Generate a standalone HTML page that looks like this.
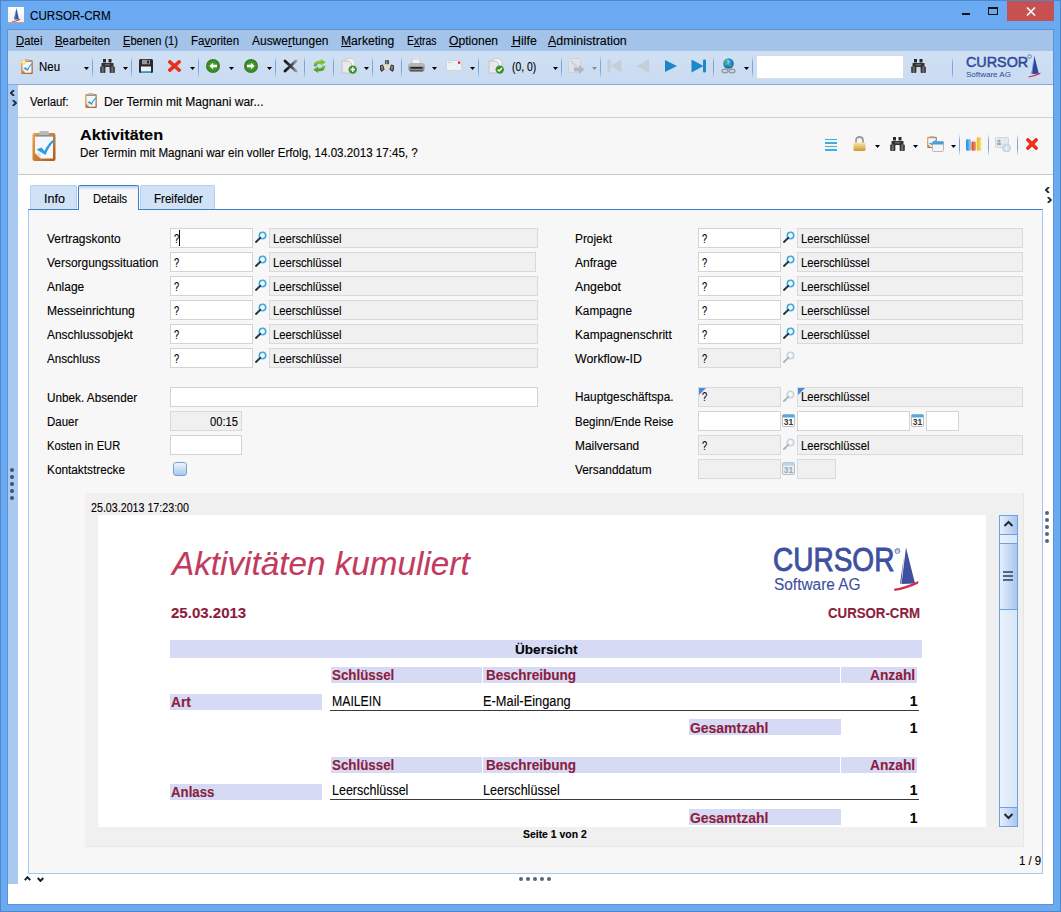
<!DOCTYPE html><html><head><meta charset="utf-8"><style>
html,body{margin:0;padding:0;}
body{width:1061px;height:912px;overflow:hidden;position:relative;background:#6aaaf3;font-family:"Liberation Sans",sans-serif;}
div,svg{position:absolute;box-sizing:border-box;}
.t{white-space:pre;-webkit-text-stroke:0.12px currentColor;}
</style></head><body>
<div style="left:0px;top:0px;width:1061px;height:912px;border:1px solid #4f86c9;"></div>
<div style="left:7px;top:29px;width:1047px;height:876px;border:1px solid #5d93d6;background:#fff;"></div>
<div style="left:8px;top:7px;width:16px;height:16px;background:linear-gradient(#fff,#f4f0ea);border-bottom:1px solid #b8a898;"></div>
<svg style="left:8px;top:7px;" width="16" height="16" viewBox="0 0 16 16"><path d="M8.5 1 L11 12.5 L6.5 12.5 Z" fill="#2d5aa8"/><path d="M8 3 L5.8 12.3 L7.6 12.3 Z" fill="#4b7dcc"/><path d="M4 14.5 Q9 13.5 12.5 11.5 L12 13 Q8 15 4 15.2Z" fill="#d83a5a"/></svg>
<div class="t" style="left:29.50px;top:10px;font-size:12px;line-height:12px;font-weight:normal;font-style:normal;color:#000;transform:scaleX(0.9683);transform-origin:0 0;">CURSOR-CRM</div>
<div style="left:962px;top:13px;width:8px;height:2px;background:#111;"></div>
<div style="left:988px;top:7px;width:10px;height:8px;border:1px solid #1a1410;border-top-width:2px;"></div>
<div style="left:1007px;top:1px;width:47px;height:20px;background:#c75050;"></div>
<svg style="left:1026px;top:7px;" width="10" height="9" viewBox="0 0 10 9"><path d="M1 0.5 L9 8.5 M9 0.5 L1 8.5" stroke="#fff" stroke-width="1.6"/></svg>
<div style="left:8px;top:30px;width:1045px;height:21px;background:#a3c3e9;"></div>
<div class="t" style="left:16.00px;top:35px;font-size:12px;line-height:12px;font-weight:normal;font-style:normal;color:#000;transform:scaleX(0.9422);transform-origin:0 0;">Datei</div>
<div style="left:15.5px;top:46px;width:8.665203426124197px;height:1px;background:#000;"></div>
<div class="t" style="left:55.00px;top:35px;font-size:12px;line-height:12px;font-weight:normal;font-style:normal;color:#000;transform:scaleX(0.9479);transform-origin:0 0;">Bearbeiten</div>
<div style="left:54.5px;top:46px;width:8.087739141675282px;height:1px;background:#000;"></div>
<div class="t" style="left:123.00px;top:35px;font-size:12px;line-height:12px;font-weight:normal;font-style:normal;color:#000;transform:scaleX(0.9259);transform-origin:0 0;">Ebenen (1)</div>
<div style="left:122.5px;top:46px;width:7.911458333333333px;height:1px;background:#000;"></div>
<div class="t" style="left:191.40px;top:35px;font-size:12px;line-height:12px;font-weight:normal;font-style:normal;color:#000;transform:scaleX(0.9612);transform-origin:0 0;">Favoriten</div>
<div style="left:204.36143959832134px;top:46px;width:6.267386091127097px;height:1px;background:#000;"></div>
<div class="t" style="left:252.20px;top:35px;font-size:12px;line-height:12px;font-weight:normal;font-style:normal;color:#000;transform:scaleX(0.9969);transform-origin:0 0;">Auswertungen</div>
<div style="left:287.6061034010946px;top:46px;width:4.484063477326036px;height:1px;background:#000;"></div>
<div class="t" style="left:341.30px;top:35px;font-size:12px;line-height:12px;font-weight:normal;font-style:normal;color:#000;transform:scaleX(1.0118);transform-origin:0 0;">Marketing</div>
<div style="left:340.8px;top:46px;width:10.614213767084284px;height:1px;background:#000;"></div>
<div class="t" style="left:407.40px;top:35px;font-size:12px;line-height:12px;font-weight:normal;font-style:normal;color:#000;transform:scaleX(0.8671);transform-origin:0 0;">Extras</div>
<div style="left:413.84088955026454px;top:46px;width:5.702821869488536px;height:1px;background:#000;"></div>
<div class="t" style="left:449.30px;top:35px;font-size:12px;line-height:12px;font-weight:normal;font-style:normal;color:#000;transform:scaleX(1.0078);transform-origin:0 0;">Optionen</div>
<div style="left:448.8px;top:46px;width:9.906550184729058px;height:1px;background:#000;"></div>
<div class="t" style="left:511.50px;top:35px;font-size:12px;line-height:12px;font-weight:normal;font-style:normal;color:#000;transform:scaleX(1.0375);transform-origin:0 0;">Hilfe</div>
<div style="left:511.0px;top:46px;width:9.49123437499999px;height:1px;background:#000;"></div>
<div class="t" style="left:548.20px;top:35px;font-size:12px;line-height:12px;font-weight:normal;font-style:normal;color:#000;transform:scaleX(1.0353);transform-origin:0 0;">Administration</div>
<div style="left:547.7px;top:46px;width:8.786560280189416px;height:1px;background:#000;"></div>
<div style="left:8px;top:51px;width:1045px;height:33px;background:linear-gradient(#d0e0f4,#c9dbf2);"></div>
<div style="left:8px;top:84px;width:1045px;height:1px;background:#7eaee3;"></div>
<div style="left:8px;top:85px;width:10px;height:799px;background:#a9c9f0;"></div>
<div style="left:18px;top:85px;width:1035px;height:819px;background:#fff;"></div>
<div style="left:18px;top:85px;width:1035px;height:32px;background:#f7f7f7;"></div>
<div style="left:18px;top:117px;width:1035px;height:1px;background:#cfcfcf;"></div>
<div class="t" style="left:30.30px;top:96px;font-size:12px;line-height:12px;font-weight:normal;font-style:normal;color:#000;transform:scaleX(0.9513);transform-origin:0 0;">Verlauf:</div>
<div class="t" style="left:103.50px;top:96px;font-size:12px;line-height:12px;font-weight:normal;font-style:normal;color:#000;transform:scaleX(1.0020);transform-origin:0 0;">Der Termin mit Magnani war...</div>
<div style="left:18px;top:118px;width:1035px;height:56px;background:#f7f7f7;"></div>
<div style="left:18px;top:174px;width:1035px;height:1px;background:#c8c8c8;"></div>
<div class="t" style="left:80.20px;top:128px;font-size:14px;line-height:14px;font-weight:bold;font-style:normal;color:#000;transform:scaleX(1.1605);transform-origin:0 0;">Aktivitäten</div>
<div class="t" style="left:80.00px;top:147px;font-size:12px;line-height:12px;font-weight:normal;font-style:normal;color:#000;transform:scaleX(0.9670);transform-origin:0 0;">Der Termin mit Magnani war ein voller Erfolg, 14.03.2013 17:45, ?</div>
<div style="left:28px;top:209px;width:1015px;height:665px;background:#f7f7f7;border:1px solid #a7c7ee;border-top:1px solid #3f7fd0;"></div>
<div style="left:30px;top:185px;width:47px;height:24px;background:#cfe2f6;border:1px solid #b3cfef;border-bottom:none;border-radius:2px 2px 0 0;"></div>
<div style="left:140px;top:185px;width:75px;height:24px;background:#cfe2f6;border:1px solid #b3cfef;border-bottom:none;border-radius:2px 2px 0 0;"></div>
<div style="left:78px;top:185px;width:61px;height:25px;background:linear-gradient(#b9d3f2,#f7f7f7 4px,#f7f7f7);border:1px solid #3f7fd0;border-bottom:none;border-radius:2px 2px 0 0;"></div>
<div class="t" style="left:43.80px;top:193px;font-size:12px;line-height:12px;font-weight:normal;font-style:normal;color:#000;transform:scaleX(1.0429);transform-origin:0 0;">Info</div>
<div class="t" style="left:92.80px;top:193px;font-size:12px;line-height:12px;font-weight:normal;font-style:normal;color:#000;transform:scaleX(0.9329);transform-origin:0 0;">Details</div>
<div class="t" style="left:154.00px;top:193px;font-size:12px;line-height:12px;font-weight:normal;font-style:normal;color:#000;transform:scaleX(0.9645);transform-origin:0 0;">Freifelder</div>
<div class="t" style="left:47.00px;top:233px;font-size:12px;line-height:12px;font-weight:normal;font-style:normal;color:#000;transform:scaleX(0.9941);transform-origin:0 0;">Vertragskonto</div>
<div style="left:170px;top:228px;width:83px;height:20px;background:#fff;border:1px solid #d4d4d4;"></div>
<div class="t" style="left:174.00px;top:233px;font-size:12px;line-height:12px;font-weight:normal;font-style:normal;color:#000;transform:scaleX(0.7800);transform-origin:0 0;">?</div>
<div style="left:269px;top:228px;width:269px;height:20px;background:#f0f0f0;border:1px solid #d9d9d9;"></div>
<svg style="left:255px;top:231px;" width="12" height="12" viewBox="0 0 12 12"><circle cx="7.5" cy="4.5" r="3.2" fill="none" stroke="#3fa9db" stroke-width="1.6"/><path d="M5.2 6.8 L1 11" stroke="#1d2f3c" stroke-width="1.8" stroke-linecap="round"/></svg>
<div class="t" style="left:273.00px;top:233px;font-size:12px;line-height:12px;font-weight:normal;font-style:normal;color:#000;transform:scaleX(0.9321);transform-origin:0 0;">Leerschlüssel</div>
<div class="t" style="left:47.00px;top:257px;font-size:12px;line-height:12px;font-weight:normal;font-style:normal;color:#000;transform:scaleX(0.9948);transform-origin:0 0;">Versorgungssituation</div>
<div style="left:170px;top:252px;width:83px;height:20px;background:#fff;border:1px solid #d4d4d4;"></div>
<div class="t" style="left:174.00px;top:257px;font-size:12px;line-height:12px;font-weight:normal;font-style:normal;color:#000;transform:scaleX(0.7800);transform-origin:0 0;">?</div>
<div style="left:269px;top:252px;width:267px;height:20px;background:#f0f0f0;border:1px solid #d9d9d9;"></div>
<svg style="left:255px;top:255px;" width="12" height="12" viewBox="0 0 12 12"><circle cx="7.5" cy="4.5" r="3.2" fill="none" stroke="#3fa9db" stroke-width="1.6"/><path d="M5.2 6.8 L1 11" stroke="#1d2f3c" stroke-width="1.8" stroke-linecap="round"/></svg>
<div class="t" style="left:273.00px;top:257px;font-size:12px;line-height:12px;font-weight:normal;font-style:normal;color:#000;transform:scaleX(0.9321);transform-origin:0 0;">Leerschlüssel</div>
<div class="t" style="left:47.00px;top:281px;font-size:12px;line-height:12px;font-weight:normal;font-style:normal;color:#000;transform:scaleX(0.9952);transform-origin:0 0;">Anlage</div>
<div style="left:170px;top:276px;width:83px;height:20px;background:#fff;border:1px solid #d4d4d4;"></div>
<div class="t" style="left:174.00px;top:281px;font-size:12px;line-height:12px;font-weight:normal;font-style:normal;color:#000;transform:scaleX(0.7800);transform-origin:0 0;">?</div>
<div style="left:269px;top:276px;width:269px;height:20px;background:#f0f0f0;border:1px solid #d9d9d9;"></div>
<svg style="left:255px;top:279px;" width="12" height="12" viewBox="0 0 12 12"><circle cx="7.5" cy="4.5" r="3.2" fill="none" stroke="#3fa9db" stroke-width="1.6"/><path d="M5.2 6.8 L1 11" stroke="#1d2f3c" stroke-width="1.8" stroke-linecap="round"/></svg>
<div class="t" style="left:273.00px;top:281px;font-size:12px;line-height:12px;font-weight:normal;font-style:normal;color:#000;transform:scaleX(0.9321);transform-origin:0 0;">Leerschlüssel</div>
<div class="t" style="left:47.00px;top:305px;font-size:12px;line-height:12px;font-weight:normal;font-style:normal;color:#000;transform:scaleX(1.0050);transform-origin:0 0;">Messeinrichtung</div>
<div style="left:170px;top:300px;width:83px;height:20px;background:#fff;border:1px solid #d4d4d4;"></div>
<div class="t" style="left:174.00px;top:305px;font-size:12px;line-height:12px;font-weight:normal;font-style:normal;color:#000;transform:scaleX(0.7800);transform-origin:0 0;">?</div>
<div style="left:269px;top:300px;width:269px;height:20px;background:#f0f0f0;border:1px solid #d9d9d9;"></div>
<svg style="left:255px;top:303px;" width="12" height="12" viewBox="0 0 12 12"><circle cx="7.5" cy="4.5" r="3.2" fill="none" stroke="#3fa9db" stroke-width="1.6"/><path d="M5.2 6.8 L1 11" stroke="#1d2f3c" stroke-width="1.8" stroke-linecap="round"/></svg>
<div class="t" style="left:273.00px;top:305px;font-size:12px;line-height:12px;font-weight:normal;font-style:normal;color:#000;transform:scaleX(0.9321);transform-origin:0 0;">Leerschlüssel</div>
<div class="t" style="left:47.00px;top:329px;font-size:12px;line-height:12px;font-weight:normal;font-style:normal;color:#000;transform:scaleX(0.9908);transform-origin:0 0;">Anschlussobjekt</div>
<div style="left:170px;top:324px;width:83px;height:20px;background:#fff;border:1px solid #d4d4d4;"></div>
<div class="t" style="left:174.00px;top:329px;font-size:12px;line-height:12px;font-weight:normal;font-style:normal;color:#000;transform:scaleX(0.7800);transform-origin:0 0;">?</div>
<div style="left:269px;top:324px;width:269px;height:20px;background:#f0f0f0;border:1px solid #d9d9d9;"></div>
<svg style="left:255px;top:327px;" width="12" height="12" viewBox="0 0 12 12"><circle cx="7.5" cy="4.5" r="3.2" fill="none" stroke="#3fa9db" stroke-width="1.6"/><path d="M5.2 6.8 L1 11" stroke="#1d2f3c" stroke-width="1.8" stroke-linecap="round"/></svg>
<div class="t" style="left:273.00px;top:329px;font-size:12px;line-height:12px;font-weight:normal;font-style:normal;color:#000;transform:scaleX(0.9321);transform-origin:0 0;">Leerschlüssel</div>
<div class="t" style="left:47.00px;top:353px;font-size:12px;line-height:12px;font-weight:normal;font-style:normal;color:#000;transform:scaleX(0.9686);transform-origin:0 0;">Anschluss</div>
<div style="left:170px;top:348px;width:83px;height:20px;background:#fff;border:1px solid #d4d4d4;"></div>
<div class="t" style="left:174.00px;top:353px;font-size:12px;line-height:12px;font-weight:normal;font-style:normal;color:#000;transform:scaleX(0.7800);transform-origin:0 0;">?</div>
<div style="left:269px;top:348px;width:269px;height:20px;background:#f0f0f0;border:1px solid #d9d9d9;"></div>
<svg style="left:255px;top:351px;" width="12" height="12" viewBox="0 0 12 12"><circle cx="7.5" cy="4.5" r="3.2" fill="none" stroke="#3fa9db" stroke-width="1.6"/><path d="M5.2 6.8 L1 11" stroke="#1d2f3c" stroke-width="1.8" stroke-linecap="round"/></svg>
<div class="t" style="left:273.00px;top:353px;font-size:12px;line-height:12px;font-weight:normal;font-style:normal;color:#000;transform:scaleX(0.9321);transform-origin:0 0;">Leerschlüssel</div>
<div style="left:179px;top:230px;width:1px;height:16px;background:#000;"></div>
<div class="t" style="left:47.00px;top:392px;font-size:12px;line-height:12px;font-weight:normal;font-style:normal;color:#000;transform:scaleX(0.9789);transform-origin:0 0;">Unbek. Absender</div>
<div class="t" style="left:47.00px;top:416px;font-size:12px;line-height:12px;font-weight:normal;font-style:normal;color:#000;transform:scaleX(0.9572);transform-origin:0 0;">Dauer</div>
<div class="t" style="left:47.00px;top:440px;font-size:12px;line-height:12px;font-weight:normal;font-style:normal;color:#000;transform:scaleX(0.9299);transform-origin:0 0;">Kosten in EUR</div>
<div class="t" style="left:47.00px;top:464px;font-size:12px;line-height:12px;font-weight:normal;font-style:normal;color:#000;transform:scaleX(0.9839);transform-origin:0 0;">Kontaktstrecke</div>
<div style="left:170px;top:387px;width:368px;height:20px;background:#fff;border:1px solid #d4d4d4;"></div>
<div style="left:170px;top:411px;width:72px;height:20px;background:#f0f0f0;border:1px solid #d9d9d9;"></div>
<div class="t" style="left:210.34px;top:416px;font-size:12px;line-height:12px;font-weight:normal;font-style:normal;color:#000;transform:scaleX(0.9300);transform-origin:0 0;">00:15</div>
<div style="left:170px;top:435px;width:72px;height:20px;background:#fff;border:1px solid #d4d4d4;"></div>
<div style="left:173px;top:462px;width:14px;height:14px;border:1px solid #76a3e0;border-radius:3px;background:linear-gradient(#f0f5fc,#a9c6ee);"></div>
<div class="t" style="left:575.00px;top:233px;font-size:12px;line-height:12px;font-weight:normal;font-style:normal;color:#000;transform:scaleX(0.9887);transform-origin:0 0;">Projekt</div>
<div style="left:698px;top:228px;width:83px;height:20px;background:#fff;border:1px solid #d4d4d4;"></div>
<div class="t" style="left:702.00px;top:233px;font-size:12px;line-height:12px;font-weight:normal;font-style:normal;color:#000;transform:scaleX(0.7800);transform-origin:0 0;">?</div>
<div style="left:797px;top:228px;width:226px;height:20px;background:#f0f0f0;border:1px solid #d9d9d9;"></div>
<svg style="left:783px;top:231px;" width="12" height="12" viewBox="0 0 12 12"><circle cx="7.5" cy="4.5" r="3.2" fill="none" stroke="#3fa9db" stroke-width="1.6"/><path d="M5.2 6.8 L1 11" stroke="#1d2f3c" stroke-width="1.8" stroke-linecap="round"/></svg>
<div class="t" style="left:801.00px;top:233px;font-size:12px;line-height:12px;font-weight:normal;font-style:normal;color:#000;transform:scaleX(0.9321);transform-origin:0 0;">Leerschlüssel</div>
<div class="t" style="left:575.00px;top:257px;font-size:12px;line-height:12px;font-weight:normal;font-style:normal;color:#000;">Anfrage</div>
<div style="left:698px;top:252px;width:83px;height:20px;background:#fff;border:1px solid #d4d4d4;"></div>
<div class="t" style="left:702.00px;top:257px;font-size:12px;line-height:12px;font-weight:normal;font-style:normal;color:#000;transform:scaleX(0.7800);transform-origin:0 0;">?</div>
<div style="left:797px;top:252px;width:226px;height:20px;background:#f0f0f0;border:1px solid #d9d9d9;"></div>
<svg style="left:783px;top:255px;" width="12" height="12" viewBox="0 0 12 12"><circle cx="7.5" cy="4.5" r="3.2" fill="none" stroke="#3fa9db" stroke-width="1.6"/><path d="M5.2 6.8 L1 11" stroke="#1d2f3c" stroke-width="1.8" stroke-linecap="round"/></svg>
<div class="t" style="left:801.00px;top:257px;font-size:12px;line-height:12px;font-weight:normal;font-style:normal;color:#000;transform:scaleX(0.9321);transform-origin:0 0;">Leerschlüssel</div>
<div class="t" style="left:575.00px;top:281px;font-size:12px;line-height:12px;font-weight:normal;font-style:normal;color:#000;transform:scaleX(1.0268);transform-origin:0 0;">Angebot</div>
<div style="left:698px;top:276px;width:83px;height:20px;background:#fff;border:1px solid #d4d4d4;"></div>
<div class="t" style="left:702.00px;top:281px;font-size:12px;line-height:12px;font-weight:normal;font-style:normal;color:#000;transform:scaleX(0.7800);transform-origin:0 0;">?</div>
<div style="left:797px;top:276px;width:226px;height:20px;background:#f0f0f0;border:1px solid #d9d9d9;"></div>
<svg style="left:783px;top:279px;" width="12" height="12" viewBox="0 0 12 12"><circle cx="7.5" cy="4.5" r="3.2" fill="none" stroke="#3fa9db" stroke-width="1.6"/><path d="M5.2 6.8 L1 11" stroke="#1d2f3c" stroke-width="1.8" stroke-linecap="round"/></svg>
<div class="t" style="left:801.00px;top:281px;font-size:12px;line-height:12px;font-weight:normal;font-style:normal;color:#000;transform:scaleX(0.9321);transform-origin:0 0;">Leerschlüssel</div>
<div class="t" style="left:575.00px;top:305px;font-size:12px;line-height:12px;font-weight:normal;font-style:normal;color:#000;transform:scaleX(0.9807);transform-origin:0 0;">Kampagne</div>
<div style="left:698px;top:300px;width:83px;height:20px;background:#fff;border:1px solid #d4d4d4;"></div>
<div class="t" style="left:702.00px;top:305px;font-size:12px;line-height:12px;font-weight:normal;font-style:normal;color:#000;transform:scaleX(0.7800);transform-origin:0 0;">?</div>
<div style="left:797px;top:300px;width:226px;height:20px;background:#f0f0f0;border:1px solid #d9d9d9;"></div>
<svg style="left:783px;top:303px;" width="12" height="12" viewBox="0 0 12 12"><circle cx="7.5" cy="4.5" r="3.2" fill="none" stroke="#3fa9db" stroke-width="1.6"/><path d="M5.2 6.8 L1 11" stroke="#1d2f3c" stroke-width="1.8" stroke-linecap="round"/></svg>
<div class="t" style="left:801.00px;top:305px;font-size:12px;line-height:12px;font-weight:normal;font-style:normal;color:#000;transform:scaleX(0.9321);transform-origin:0 0;">Leerschlüssel</div>
<div class="t" style="left:575.00px;top:329px;font-size:12px;line-height:12px;font-weight:normal;font-style:normal;color:#000;">Kampagnenschritt</div>
<div style="left:698px;top:324px;width:83px;height:20px;background:#fff;border:1px solid #d4d4d4;"></div>
<div class="t" style="left:702.00px;top:329px;font-size:12px;line-height:12px;font-weight:normal;font-style:normal;color:#000;transform:scaleX(0.7800);transform-origin:0 0;">?</div>
<div style="left:797px;top:324px;width:226px;height:20px;background:#f0f0f0;border:1px solid #d9d9d9;"></div>
<svg style="left:783px;top:327px;" width="12" height="12" viewBox="0 0 12 12"><circle cx="7.5" cy="4.5" r="3.2" fill="none" stroke="#3fa9db" stroke-width="1.6"/><path d="M5.2 6.8 L1 11" stroke="#1d2f3c" stroke-width="1.8" stroke-linecap="round"/></svg>
<div class="t" style="left:801.00px;top:329px;font-size:12px;line-height:12px;font-weight:normal;font-style:normal;color:#000;transform:scaleX(0.9321);transform-origin:0 0;">Leerschlüssel</div>
<div class="t" style="left:575.00px;top:353px;font-size:12px;line-height:12px;font-weight:normal;font-style:normal;color:#000;transform:scaleX(1.0276);transform-origin:0 0;">Workflow-ID</div>
<div style="left:698px;top:348px;width:83px;height:20px;background:#f0f0f0;border:1px solid #d9d9d9;"></div>
<div class="t" style="left:702.00px;top:353px;font-size:12px;line-height:12px;font-weight:normal;font-style:normal;color:#000;transform:scaleX(0.7800);transform-origin:0 0;">?</div>
<svg style="left:783px;top:351px;" width="12" height="12" viewBox="0 0 12 12"><circle cx="7.5" cy="4.5" r="3.2" fill="none" stroke="#c6d3dc" stroke-width="1.6"/><path d="M5.2 6.8 L1 11" stroke="#aab4bc" stroke-width="1.8" stroke-linecap="round"/></svg>
<div class="t" style="left:575.00px;top:391px;font-size:12px;line-height:12px;font-weight:normal;font-style:normal;color:#000;transform:scaleX(0.9842);transform-origin:0 0;">Hauptgeschäftspa.</div>
<div class="t" style="left:575.00px;top:416px;font-size:12px;line-height:12px;font-weight:normal;font-style:normal;color:#000;transform:scaleX(0.9570);transform-origin:0 0;">Beginn/Ende Reise</div>
<div class="t" style="left:575.00px;top:440px;font-size:12px;line-height:12px;font-weight:normal;font-style:normal;color:#000;transform:scaleX(0.9910);transform-origin:0 0;">Mailversand</div>
<div class="t" style="left:575.00px;top:464px;font-size:12px;line-height:12px;font-weight:normal;font-style:normal;color:#000;transform:scaleX(0.9897);transform-origin:0 0;">Versanddatum</div>
<div style="left:698px;top:387px;width:83px;height:20px;background:#f0f0f0;border:1px solid #d9d9d9;"></div>
<div class="t" style="left:702.00px;top:391px;font-size:12px;line-height:12px;font-weight:normal;font-style:normal;color:#000;transform:scaleX(0.7800);transform-origin:0 0;">?</div>
<svg style="left:783px;top:390px;" width="12" height="12" viewBox="0 0 12 12"><circle cx="7.5" cy="4.5" r="3.2" fill="none" stroke="#c6d3dc" stroke-width="1.6"/><path d="M5.2 6.8 L1 11" stroke="#aab4bc" stroke-width="1.8" stroke-linecap="round"/></svg>
<div style="left:797px;top:387px;width:226px;height:20px;background:#f0f0f0;border:1px solid #d9d9d9;"></div>
<div class="t" style="left:801.00px;top:391px;font-size:12px;line-height:12px;font-weight:normal;font-style:normal;color:#000;transform:scaleX(0.9321);transform-origin:0 0;">Leerschlüssel</div>
<svg style="left:699px;top:388px;" width="8" height="8" viewBox="0 0 8 8"><path d="M0 0 H7 L0 7 Z" fill="#4a8ad8"/></svg>
<svg style="left:798px;top:388px;" width="8" height="8" viewBox="0 0 8 8"><path d="M0 0 H7 L0 7 Z" fill="#4a8ad8"/></svg>
<div style="left:698px;top:411px;width:83px;height:20px;background:#fff;border:1px solid #d4d4d4;"></div>
<div style="left:797px;top:411px;width:113px;height:20px;background:#fff;border:1px solid #d4d4d4;"></div>
<div style="left:926px;top:411px;width:33px;height:20px;background:#fff;border:1px solid #d4d4d4;"></div>
<svg style="left:782px;top:414px;" width="13" height="13" viewBox="0 0 13 13"><rect x="0.5" y="0.5" width="12" height="12" rx="1.5" fill="#fff" stroke="#b0b0b0" stroke-width="0.8"/><rect x="0.5" y="0.5" width="12" height="3" rx="1" fill="#52a8e0"/><text x="6.5" y="11.3" font-family="Liberation Sans" font-weight="bold" font-size="8.5" text-anchor="middle" fill="#333">31</text></svg>
<svg style="left:911px;top:414px;" width="13" height="13" viewBox="0 0 13 13"><rect x="0.5" y="0.5" width="12" height="12" rx="1.5" fill="#fff" stroke="#b0b0b0" stroke-width="0.8"/><rect x="0.5" y="0.5" width="12" height="3" rx="1" fill="#52a8e0"/><text x="6.5" y="11.3" font-family="Liberation Sans" font-weight="bold" font-size="8.5" text-anchor="middle" fill="#333">31</text></svg>
<div style="left:698px;top:435px;width:83px;height:20px;background:#f0f0f0;border:1px solid #d9d9d9;"></div>
<div class="t" style="left:702.00px;top:440px;font-size:12px;line-height:12px;font-weight:normal;font-style:normal;color:#000;transform:scaleX(0.7800);transform-origin:0 0;">?</div>
<svg style="left:783px;top:438px;" width="12" height="12" viewBox="0 0 12 12"><circle cx="7.5" cy="4.5" r="3.2" fill="none" stroke="#c6d3dc" stroke-width="1.6"/><path d="M5.2 6.8 L1 11" stroke="#aab4bc" stroke-width="1.8" stroke-linecap="round"/></svg>
<div style="left:797px;top:435px;width:226px;height:20px;background:#f0f0f0;border:1px solid #d9d9d9;"></div>
<div class="t" style="left:801.00px;top:440px;font-size:12px;line-height:12px;font-weight:normal;font-style:normal;color:#000;transform:scaleX(0.9321);transform-origin:0 0;">Leerschlüssel</div>
<div style="left:698px;top:459px;width:83px;height:20px;background:#f0f0f0;border:1px solid #d9d9d9;"></div>
<div style="left:797px;top:459px;width:39px;height:20px;background:#f0f0f0;border:1px solid #d9d9d9;"></div>
<svg style="left:782px;top:462px;" width="13" height="13" viewBox="0 0 13 13"><rect x="0.5" y="0.5" width="12" height="12" rx="1.5" fill="#e6edf3" stroke="#b0b0b0" stroke-width="0.8"/><rect x="0.5" y="0.5" width="12" height="3" rx="1" fill="#b8d4ea"/><text x="6.5" y="11.3" font-family="Liberation Sans" font-weight="bold" font-size="8.5" text-anchor="middle" fill="#9aa">31</text></svg>
<div style="left:85px;top:493px;width:939px;height:354px;background:#f0f0f0;border-right:1px solid #e6e6e6;border-bottom:1px solid #e6e6e6;"></div>
<div class="t" style="left:91.00px;top:502px;font-size:12px;line-height:12px;font-weight:normal;font-style:normal;color:#000;transform:scaleX(0.8901);transform-origin:0 0;">25.03.2013 17:23:00</div>
<div style="left:98px;top:515px;width:888px;height:312px;background:#fff;"></div>
<div class="t" style="left:523.10px;top:830px;font-size:10px;line-height:10px;font-weight:bold;font-style:normal;color:#000;transform:scaleX(1.0417);transform-origin:0 0;">Seite 1 von 2</div>
<div class="t" style="left:171.66px;top:547px;font-size:33px;line-height:33px;font-weight:normal;font-style:italic;color:#c23b5e;transform:scaleX(1.0082);transform-origin:0 0;">Aktivitäten kumuliert</div>
<div class="t" style="left:170.80px;top:606px;font-size:14px;line-height:14px;font-weight:bold;font-style:normal;color:#8c1d3c;transform:scaleX(1.0732);transform-origin:0 0;">25.03.2013</div>
<div class="t" style="left:828.30px;top:606px;font-size:14px;line-height:14px;font-weight:bold;font-style:normal;color:#8c1d3c;transform:scaleX(0.9462);transform-origin:0 0;">CURSOR-CRM</div>
<div style="left:170px;top:640px;width:752px;height:18px;background:#d6daf4;"></div>
<div class="t" style="left:514.70px;top:643px;font-size:13px;line-height:13px;font-weight:bold;font-style:normal;color:#000;transform:scaleX(1.0446);transform-origin:0 0;">Übersicht</div>
<div style="left:331px;top:667px;width:151px;height:16px;background:#d6daf4;"></div>
<div style="left:483px;top:667px;width:357px;height:16px;background:#d6daf4;"></div>
<div style="left:841px;top:667px;width:76px;height:16px;background:#d6daf4;"></div>
<div class="t" style="left:332.20px;top:668px;font-size:14px;line-height:14px;font-weight:bold;font-style:normal;color:#8c1d3c;transform:scaleX(0.9529);transform-origin:0 0;">Schlüssel</div>
<div class="t" style="left:485.70px;top:668px;font-size:14px;line-height:14px;font-weight:bold;font-style:normal;color:#8c1d3c;transform:scaleX(0.9649);transform-origin:0 0;">Beschreibung</div>
<div class="t" style="left:870.40px;top:668px;font-size:14px;line-height:14px;font-weight:bold;font-style:normal;color:#8c1d3c;transform:scaleX(0.9843);transform-origin:0 0;">Anzahl</div>
<div style="left:170px;top:694px;width:152px;height:16px;background:#d6daf4;"></div>
<div class="t" style="left:171.10px;top:695px;font-size:14px;line-height:14px;font-weight:bold;font-style:normal;color:#8c1d3c;transform:scaleX(0.9837);transform-origin:0 0;">Art</div>
<div class="t" style="left:332.00px;top:694px;font-size:14px;line-height:14px;font-weight:normal;font-style:normal;color:#000;transform:scaleX(0.8750);transform-origin:0 0;">MAILEIN</div>
<div class="t" style="left:483.30px;top:694px;font-size:14px;line-height:14px;font-weight:normal;font-style:normal;color:#000;transform:scaleX(0.9165);transform-origin:0 0;">E-Mail-Eingang</div>
<div class="t" style="left:909.63px;top:694px;font-size:14px;line-height:14px;font-weight:bold;font-style:normal;color:#000;">1</div>
<div style="left:330px;top:710px;width:589px;height:1px;background:#3a3a3a;"></div>
<div style="left:689px;top:719px;width:152px;height:16px;background:#d6daf4;"></div>
<div class="t" style="left:690.30px;top:721px;font-size:14px;line-height:14px;font-weight:bold;font-style:normal;color:#8c1d3c;transform:scaleX(0.9961);transform-origin:0 0;">Gesamtzahl</div>
<div class="t" style="left:909.63px;top:721px;font-size:14px;line-height:14px;font-weight:bold;font-style:normal;color:#000;">1</div>
<div style="left:331px;top:757px;width:151px;height:16px;background:#d6daf4;"></div>
<div style="left:483px;top:757px;width:357px;height:16px;background:#d6daf4;"></div>
<div style="left:841px;top:757px;width:76px;height:16px;background:#d6daf4;"></div>
<div class="t" style="left:332.20px;top:758px;font-size:14px;line-height:14px;font-weight:bold;font-style:normal;color:#8c1d3c;transform:scaleX(0.9529);transform-origin:0 0;">Schlüssel</div>
<div class="t" style="left:485.70px;top:758px;font-size:14px;line-height:14px;font-weight:bold;font-style:normal;color:#8c1d3c;transform:scaleX(0.9649);transform-origin:0 0;">Beschreibung</div>
<div class="t" style="left:870.40px;top:758px;font-size:14px;line-height:14px;font-weight:bold;font-style:normal;color:#8c1d3c;transform:scaleX(0.9843);transform-origin:0 0;">Anzahl</div>
<div style="left:170px;top:784px;width:152px;height:16px;background:#d6daf4;"></div>
<div class="t" style="left:171.10px;top:785px;font-size:14px;line-height:14px;font-weight:bold;font-style:normal;color:#8c1d3c;transform:scaleX(0.9451);transform-origin:0 0;">Anlass</div>
<div class="t" style="left:332.00px;top:783px;font-size:14px;line-height:14px;font-weight:normal;font-style:normal;color:#000;transform:scaleX(0.8924);transform-origin:0 0;">Leerschlüssel</div>
<div class="t" style="left:483.30px;top:783px;font-size:14px;line-height:14px;font-weight:normal;font-style:normal;color:#000;transform:scaleX(0.8959);transform-origin:0 0;">Leerschlüssel</div>
<div class="t" style="left:909.63px;top:783px;font-size:14px;line-height:14px;font-weight:bold;font-style:normal;color:#000;">1</div>
<div style="left:330px;top:799px;width:589px;height:1px;background:#3a3a3a;"></div>
<div style="left:689px;top:809px;width:152px;height:16px;background:#d6daf4;"></div>
<div class="t" style="left:690.30px;top:811px;font-size:14px;line-height:14px;font-weight:bold;font-style:normal;color:#8c1d3c;transform:scaleX(0.9961);transform-origin:0 0;">Gesamtzahl</div>
<div class="t" style="left:909.63px;top:811px;font-size:14px;line-height:14px;font-weight:bold;font-style:normal;color:#000;">1</div>
<div style="left:999px;top:515px;width:19px;height:312px;background:linear-gradient(90deg,#eaf2fc,#d8e6f8);border:1px solid #6fa0e0;"></div>
<div style="left:999px;top:515px;width:19px;height:20px;background:linear-gradient(90deg,#e6effb,#a9c6ee);border:1px solid #6fa0e0;"></div>
<div style="left:999px;top:543px;width:19px;height:67px;background:linear-gradient(90deg,#e6effb,#a9c6ee);border:1px solid #6fa0e0;"></div>
<div style="left:999px;top:807px;width:19px;height:20px;background:linear-gradient(90deg,#e6effb,#a9c6ee);border:1px solid #6fa0e0;"></div>
<svg style="left:1002px;top:519px;" width="13" height="10" viewBox="0 0 13 10"><path d="M2.5 7 L6.5 3 L10.5 7" stroke="#1c2a3c" stroke-width="2" fill="none"/></svg>
<svg style="left:1002px;top:811px;" width="13" height="10" viewBox="0 0 13 10"><path d="M2.5 3 L6.5 7 L10.5 3" stroke="#1c2a3c" stroke-width="2" fill="none"/></svg>
<div style="left:1003px;top:571px;width:10px;height:2px;background:#4a6a90;"></div>
<div style="left:1003px;top:575px;width:10px;height:2px;background:#4a6a90;"></div>
<div style="left:1003px;top:579px;width:10px;height:2px;background:#4a6a90;"></div>
<div class="t" style="left:1019.33px;top:855px;font-size:12px;line-height:12px;font-weight:normal;font-style:normal;color:#000;transform:scaleX(0.9500);transform-origin:0 0;">1 / 9</div>
<div style="left:519px;top:877px;width:4px;height:4px;background:#56657e;border-radius:2px;"></div>
<div style="left:526px;top:877px;width:4px;height:4px;background:#56657e;border-radius:2px;"></div>
<div style="left:533px;top:877px;width:4px;height:4px;background:#56657e;border-radius:2px;"></div>
<div style="left:540px;top:877px;width:4px;height:4px;background:#56657e;border-radius:2px;"></div>
<div style="left:547px;top:877px;width:4px;height:4px;background:#56657e;border-radius:2px;"></div>
<div style="left:1045px;top:511px;width:4px;height:4px;background:#56657e;border-radius:2px;"></div>
<div style="left:1045px;top:518px;width:4px;height:4px;background:#56657e;border-radius:2px;"></div>
<div style="left:1045px;top:525px;width:4px;height:4px;background:#56657e;border-radius:2px;"></div>
<div style="left:1045px;top:532px;width:4px;height:4px;background:#56657e;border-radius:2px;"></div>
<div style="left:1045px;top:539px;width:4px;height:4px;background:#56657e;border-radius:2px;"></div>
<div style="left:10px;top:468px;width:4px;height:4px;background:#3f5170;border-radius:2px;"></div>
<div style="left:10px;top:475px;width:4px;height:4px;background:#3f5170;border-radius:2px;"></div>
<div style="left:10px;top:482px;width:4px;height:4px;background:#3f5170;border-radius:2px;"></div>
<div style="left:10px;top:489px;width:4px;height:4px;background:#3f5170;border-radius:2px;"></div>
<div style="left:10px;top:496px;width:4px;height:4px;background:#3f5170;border-radius:2px;"></div>
<div class="t" style="left:773.30px;top:543px;font-size:33px;line-height:33px;font-weight:normal;font-style:normal;color:#3e50a0;transform:scaleX(0.8486);transform-origin:0 0;-webkit-text-stroke:0.9px #3e50a0;">CURSOR</div>
<div class="t" style="left:773.70px;top:577px;font-size:16px;line-height:16px;font-weight:normal;font-style:normal;color:#3e50a0;transform:scaleX(0.9639);transform-origin:0 0;">Software AG</div>
<svg style="left:894px;top:548px;" width="8" height="8" viewBox="0 0 8 8"><circle cx="3.5" cy="3" r="2.4" fill="none" stroke="#3e50a0" stroke-width="0.8"/><text x="3.5" y="4.4" font-size="3.6" text-anchor="middle" fill="#3e50a0" font-family="Liberation Sans">R</text></svg>
<svg style="left:893px;top:546px;" width="27" height="45" viewBox="0 0 27 45"><path d="M13 1.5 L22 37.5 L8.5 38 Z" fill="#3e50a0"/><path d="M11 10 L7 37.5 L8.2 37.6 Z" fill="#3e50a0"/><path d="M1 42.8 Q12 41 25.5 35 L25 37.8 Q13 43.5 1.5 45 Z" fill="#d0304e"/></svg>
<svg style="left:21px;top:59px;" width="12" height="15" viewBox="0 0 12 15"><g transform="scale(0.5000,0.5000)"><defs><linearGradient id="cbg21_59" x1="0" y1="0" x2="1" y2="1"><stop offset="0" stop-color="#f0a048"/><stop offset="1" stop-color="#a85a1c"/></linearGradient></defs>
<rect x="0.5" y="2" width="23" height="28" rx="2" fill="url(#cbg21_59)"/>
<path d="M3 5 H21 V27.5 H8.5 L3 22 Z" fill="#f4f7fb"/>
<path d="M3 22 L8.5 22.5 L8.5 27.5 Z" fill="#dcdcdc"/>
<rect x="7" y="0" width="10" height="4.5" rx="2" fill="#b9b9b9"/>
<rect x="3" y="4" width="18" height="1.6" fill="#8e8e8e"/>
<path d="M4.5 18.5 L9.5 16.5 L12.5 20 Q16.5 11 23.5 7.5 L22.5 10 Q17 15 13.5 24 Z" fill="#2f9be0"/><circle cx="5" cy="6" r="5" fill="#f8d860" opacity="0.95"/><circle cx="5" cy="6" r="2.6" fill="#fff4c0"/></g></svg>
<div class="t" style="left:39.00px;top:61px;font-size:12px;line-height:12px;font-weight:normal;font-style:normal;color:#000;transform:scaleX(0.9537);transform-origin:0 0;">Neu</div>
<svg style="left:84px;top:67px;" width="5" height="3" viewBox="0 0 5 3"><path d="M0 0 H5 L2.5 3 Z" fill="#000"/></svg>
<div style="left:92px;top:56px;width:1px;height:22px;background:linear-gradient(rgba(120,165,220,0),#7aa6d8 30%,#7aa6d8 70%,rgba(120,165,220,0));"></div>
<svg style="left:100px;top:59px;" width="15" height="14" viewBox="0 0 15 14"><g transform="scale(1.0000,1.0000)"><defs><linearGradient id="bn100_59" x1="0" x2="1"><stop offset="0" stop-color="#111"/><stop offset="0.5" stop-color="#7a7a7a"/><stop offset="1" stop-color="#111"/></linearGradient></defs>
<rect x="3" y="0" width="3" height="3.5" fill="#2a2a2a"/><rect x="8.5" y="0" width="3" height="3.5" fill="#2a2a2a"/>
<path d="M1.5 4 H13.5 V8 H1.5 Z" fill="#333"/><rect x="5" y="5" width="5" height="1.5" fill="#666"/>
<rect x="0.3" y="7.5" width="5" height="6.5" rx="0.8" fill="url(#bn100_59)"/><rect x="9.7" y="7.5" width="5" height="6.5" rx="0.8" fill="url(#bn100_59)"/></g></svg>
<svg style="left:123px;top:67px;" width="5" height="3" viewBox="0 0 5 3"><path d="M0 0 H5 L2.5 3 Z" fill="#000"/></svg>
<div style="left:131px;top:56px;width:1px;height:22px;background:linear-gradient(rgba(120,165,220,0),#7aa6d8 30%,#7aa6d8 70%,rgba(120,165,220,0));"></div>
<svg style="left:139px;top:59px;" width="14" height="14" viewBox="0 0 14 14"><rect x="0" y="0" width="14" height="14" rx="1.5" fill="#2a2a2a"/><rect x="3" y="0.8" width="8" height="4.5" fill="#9a9a9a"/><rect x="8" y="1.5" width="2" height="3" fill="#2a2a2a"/><rect x="2" y="7.5" width="10" height="6.5" fill="#f0f0f0"/><rect x="2" y="12.2" width="10" height="1.8" fill="#2c9ad8"/></svg>
<svg style="left:168px;top:60px;" width="13" height="12" viewBox="0 0 13 12"><path d="M2 2 L11 10 M11 2 L2 10" stroke="#e8301c" stroke-width="3.6" stroke-linecap="square"/></svg>
<svg style="left:190px;top:67px;" width="5" height="3" viewBox="0 0 5 3"><path d="M0 0 H5 L2.5 3 Z" fill="#000"/></svg>
<div style="left:198px;top:56px;width:1px;height:22px;background:linear-gradient(rgba(120,165,220,0),#7aa6d8 30%,#7aa6d8 70%,rgba(120,165,220,0));"></div>
<svg style="left:206px;top:59px;" width="14" height="14" viewBox="0 0 14 14"><defs><radialGradient id="gc206"><stop offset="0" stop-color="#5cb040"/><stop offset="1" stop-color="#2e7d1e"/></radialGradient></defs><circle cx="7" cy="7" r="7" fill="url(#gc206)"/><path d="M3.5 7 L7 3.8 V5.8 H11 V8.2 H7 V10.2 Z" fill="#fff"/></svg>
<svg style="left:229px;top:67px;" width="5" height="3" viewBox="0 0 5 3"><path d="M0 0 H5 L2.5 3 Z" fill="#000"/></svg>
<svg style="left:244px;top:59px;" width="14" height="14" viewBox="0 0 14 14"><defs><radialGradient id="gc244"><stop offset="0" stop-color="#5cb040"/><stop offset="1" stop-color="#2e7d1e"/></radialGradient></defs><circle cx="7" cy="7" r="7" fill="url(#gc244)"/><path d="M10.5 7 L7 3.8 V5.8 H3 V8.2 H7 V10.2 Z" fill="#fff"/></svg>
<svg style="left:267px;top:67px;" width="5" height="3" viewBox="0 0 5 3"><path d="M0 0 H5 L2.5 3 Z" fill="#000"/></svg>
<div style="left:275px;top:56px;width:1px;height:22px;background:linear-gradient(rgba(120,165,220,0),#7aa6d8 30%,#7aa6d8 70%,rgba(120,165,220,0));"></div>
<svg style="left:283px;top:59px;" width="15" height="14" viewBox="0 0 15 14"><defs><linearGradient id="dx" x1="0" x2="1"><stop offset="0" stop-color="#111"/><stop offset="0.6" stop-color="#444"/><stop offset="1" stop-color="#9a9a9a"/></linearGradient></defs><path d="M2 2 L13 12 M13 2 L2 12" stroke="url(#dx)" stroke-width="2.8" stroke-linecap="round"/></svg>
<div style="left:304px;top:56px;width:1px;height:22px;background:linear-gradient(rgba(120,165,220,0),#7aa6d8 30%,#7aa6d8 70%,rgba(120,165,220,0));"></div>
<svg style="left:313px;top:59px;" width="13" height="14" viewBox="0 0 13 14"><defs><linearGradient id="rf" x1="0" y1="0" x2="0" y2="1"><stop offset="0" stop-color="#86c83a"/><stop offset="1" stop-color="#4aa52a"/></linearGradient></defs><path d="M2.2 7.2 Q2.2 3.2 6.5 3.2 L8.2 3.2" stroke="url(#rf)" stroke-width="3" fill="none"/><path d="M7.8 0 L12.8 3.2 L7.8 6.4 Z" fill="#7cc236"/><path d="M10.8 6.8 Q10.8 10.8 6.5 10.8 L4.8 10.8" stroke="url(#rf)" stroke-width="3" fill="none"/><path d="M5.2 7.6 L0.2 10.8 L5.2 14 Z" fill="#4fa82b"/></svg>
<div style="left:333px;top:56px;width:1px;height:22px;background:linear-gradient(rgba(120,165,220,0),#7aa6d8 30%,#7aa6d8 70%,rgba(120,165,220,0));"></div>
<svg style="left:341px;top:58px;" width="16" height="16" viewBox="0 0 16 16"><path d="M5 0.5 H11 L14 3.5 V13 H5 Z" fill="#f2f2f2" stroke="#c6c6c6" stroke-width="0.8"/><path d="M1 3 H8 L10.5 5.5 V15 H1 Z" fill="#e9e9e9" stroke="#bdbdbd" stroke-width="0.8"/><circle cx="11.75" cy="11.6" r="4.2" fill="#3d8f2a"/><path d="M9.5 11.5 H14 M11.75 9.2 V13.8" stroke="#fff" stroke-width="1.6"/></svg>
<svg style="left:364px;top:67px;" width="5" height="3" viewBox="0 0 5 3"><path d="M0 0 H5 L2.5 3 Z" fill="#000"/></svg>
<div style="left:372px;top:56px;width:1px;height:22px;background:linear-gradient(rgba(120,165,220,0),#7aa6d8 30%,#7aa6d8 70%,rgba(120,165,220,0));"></div>
<svg style="left:380px;top:60px;" width="15" height="12" viewBox="0 0 15 12"><rect x="5" y="0" width="4" height="4.8" rx="0.8" fill="#4a4a4a"/><rect x="6" y="0.5" width="1.5" height="4" fill="#8a8a8a"/><path d="M0 5.2 L5 4.2 H9 L14 5.2 V9.8 L12.5 12 L9 8.8 H5 L1.5 12 L0 9.8 Z" fill="#e2dccd"/><path d="M0 5.2 L3 4.6 L4.6 9.6 L1.5 12 L0 9.8 Z" fill="#3e3e3e"/><path d="M14 5.2 L11 4.6 L9.4 9.6 L12.5 12 L14 9.8 Z" fill="#3e3e3e"/><path d="M1 6 L2.5 5.8 L3.2 9 L1.6 10.5 Z" fill="#8a8a8a"/><path d="M13 6 L11.5 5.8 L10.8 9 L12.4 10.5 Z" fill="#8a8a8a"/></svg>
<div style="left:401px;top:56px;width:1px;height:22px;background:linear-gradient(rgba(120,165,220,0),#7aa6d8 30%,#7aa6d8 70%,rgba(120,165,220,0));"></div>
<svg style="left:408px;top:59px;" width="17" height="13" viewBox="0 0 17 13"><rect x="4" y="0" width="8" height="5" fill="#f4f4f4" stroke="#bbb" stroke-width="0.6"/><rect x="0.5" y="4.5" width="16" height="8" rx="2" fill="#8c8c8c"/><rect x="0.5" y="4.5" width="16" height="3" rx="1.5" fill="#b5b5b5"/><rect x="2.5" y="8" width="12" height="1.6" fill="#1e1e1e"/><rect x="2" y="11" width="13" height="1.5" fill="#5e5e5e"/></svg>
<svg style="left:432px;top:67px;" width="5" height="3" viewBox="0 0 5 3"><path d="M0 0 H5 L2.5 3 Z" fill="#000"/></svg>
<svg style="left:446px;top:60px;" width="16" height="11" viewBox="0 0 16 11"><rect x="0.5" y="0.5" width="15" height="10" rx="1" fill="#eef2f4" stroke="#c9cfd3" stroke-width="0.8"/><rect x="12" y="1.5" width="2.2" height="2.2" fill="#e8141a"/><rect x="2" y="2" width="4" height="0.8" fill="#c0c6cc"/><rect x="5" y="6" width="6" height="2.5" fill="#f9f9f9" stroke="#dde" stroke-width="0.4"/></svg>
<svg style="left:470px;top:67px;" width="5" height="3" viewBox="0 0 5 3"><path d="M0 0 H5 L2.5 3 Z" fill="#000"/></svg>
<div style="left:478px;top:56px;width:1px;height:22px;background:linear-gradient(rgba(120,165,220,0),#7aa6d8 30%,#7aa6d8 70%,rgba(120,165,220,0));"></div>
<svg style="left:488px;top:58px;" width="16" height="16" viewBox="0 0 16 16"><path d="M5 0.5 H11 L14 3.5 V13 H5 Z" fill="#f2f2f2" stroke="#c6c6c6" stroke-width="0.8"/><path d="M1 3 H8 L10.5 5.5 V15 H1 Z" fill="#e9e9e9" stroke="#bdbdbd" stroke-width="0.8"/><circle cx="11.75" cy="11.6" r="4.2" fill="#3d8f2a"/><path d="M9.6 11.6 L11.2 13 L14 10" stroke="#fff" stroke-width="1.4" fill="none"/></svg>
<div class="t" style="left:511.60px;top:61px;font-size:12px;line-height:12px;font-weight:normal;font-style:normal;color:#000;transform:scaleX(0.8637);transform-origin:0 0;">(0, 0)</div>
<svg style="left:553px;top:67px;" width="5" height="3" viewBox="0 0 5 3"><path d="M0 0 H5 L2.5 3 Z" fill="#000"/></svg>
<div style="left:561px;top:56px;width:1px;height:22px;background:linear-gradient(rgba(120,165,220,0),#7aa6d8 30%,#7aa6d8 70%,rgba(120,165,220,0));"></div>
<svg style="left:568px;top:58px;" width="17" height="16" viewBox="0 0 17 16"><rect x="0.5" y="0.5" width="12" height="14" rx="1" fill="#dfe3e8" stroke="#c9ced6" stroke-width="0.8"/><path d="M3 3 L9 9" stroke="#c8ccd2" stroke-width="1.4"/><path d="M6 9.5 H11 V7 L16.5 11.5 L11 16 V13.5 H6 Z" fill="#aeb8c4"/></svg>
<svg style="left:592px;top:67px;" width="5" height="3" viewBox="0 0 5 3"><path d="M0 0 H5 L2.5 3 Z" fill="#8a8a8a"/></svg>
<div style="left:600px;top:56px;width:1px;height:22px;background:linear-gradient(rgba(120,165,220,0),#7aa6d8 30%,#7aa6d8 70%,rgba(120,165,220,0));"></div>
<svg style="left:607px;top:59px;" width="15" height="14" viewBox="0 0 15 14"><rect x="0.5" y="0.5" width="3" height="13" rx="1" fill="#c5cdd6"/><path d="M3.5 7 L14.5 0.5 V13.5 Z" fill="#c5cdd6"/></svg>
<svg style="left:637px;top:59px;" width="12" height="14" viewBox="0 0 12 14"><path d="M0 7 L12 0 V14 Z" fill="#c5cdd6"/></svg>
<svg style="left:665px;top:60px;" width="12" height="12" viewBox="0 0 12 12"><path d="M0 0 L12 6 L0 12 Z" fill="#1b88ca"/></svg>
<svg style="left:691px;top:59px;" width="16" height="14" viewBox="0 0 16 14"><path d="M0.5 0.5 L12.5 7 L0.5 13.5 Z" fill="#1b88ca"/><rect x="12" y="0.5" width="3" height="13" rx="1" fill="#1b88ca"/></svg>
<div style="left:713px;top:56px;width:1px;height:22px;background:linear-gradient(rgba(120,165,220,0),#7aa6d8 30%,#7aa6d8 70%,rgba(120,165,220,0));"></div>
<svg style="left:721px;top:58px;" width="15" height="16" viewBox="0 0 15 16"><defs><radialGradient id="gl" cx="0.4" cy="0.35"><stop offset="0" stop-color="#d8f6ff"/><stop offset="0.45" stop-color="#38a8e0"/><stop offset="1" stop-color="#1a6fb8"/></radialGradient></defs><circle cx="7.5" cy="5.5" r="5.3" fill="url(#gl)"/><path d="M4 3 Q6 2 7 4 Q6 6 4.5 6.5 Z M8 6 Q10 5 11 7.5 Q9 9.5 8 8.5 Z" fill="#4cae3a"/><ellipse cx="4" cy="13" rx="3" ry="1.8" fill="none" stroke="#9a9a9a" stroke-width="1.4"/><ellipse cx="11" cy="13" rx="3" ry="1.8" fill="none" stroke="#9a9a9a" stroke-width="1.4"/></svg>
<svg style="left:744px;top:67px;" width="5" height="3" viewBox="0 0 5 3"><path d="M0 0 H5 L2.5 3 Z" fill="#000"/></svg>
<div style="left:752px;top:56px;width:1px;height:22px;background:linear-gradient(rgba(120,165,220,0),#7aa6d8 30%,#7aa6d8 70%,rgba(120,165,220,0));"></div>
<div style="left:756px;top:55px;width:148px;height:24px;background:#fff;border:1px solid #d8dde4;"></div>
<svg style="left:911px;top:59px;" width="15" height="14" viewBox="0 0 15 14"><g transform="scale(1.0000,1.0000)"><defs><linearGradient id="bn911_59" x1="0" x2="1"><stop offset="0" stop-color="#111"/><stop offset="0.5" stop-color="#7a7a7a"/><stop offset="1" stop-color="#111"/></linearGradient></defs>
<rect x="3" y="0" width="3" height="3.5" fill="#2a2a2a"/><rect x="8.5" y="0" width="3" height="3.5" fill="#2a2a2a"/>
<path d="M1.5 4 H13.5 V8 H1.5 Z" fill="#333"/><rect x="5" y="5" width="5" height="1.5" fill="#666"/>
<rect x="0.3" y="7.5" width="5" height="6.5" rx="0.8" fill="url(#bn911_59)"/><rect x="9.7" y="7.5" width="5" height="6.5" rx="0.8" fill="url(#bn911_59)"/></g></svg>
<div style="left:952px;top:57px;width:1px;height:22px;background:linear-gradient(rgba(120,165,220,0),#7aa6d8 30%,#7aa6d8 70%,rgba(120,165,220,0));"></div>
<div class="t" style="left:965.80px;top:54px;font-size:15px;line-height:15px;font-weight:normal;font-style:normal;color:#2b4a9a;transform:scaleX(0.9566);transform-origin:0 0;-webkit-text-stroke:0.5px #2b4a9a;">CURSOR</div>
<div class="t" style="left:966.00px;top:71px;font-size:8px;line-height:8px;font-weight:normal;font-style:normal;color:#2b4a9a;-webkit-text-stroke:0;">Software AG</div>
<svg style="left:1027px;top:54px;" width="5" height="5" viewBox="0 0 5 5"><circle cx="2.5" cy="2.5" r="1.8" fill="none" stroke="#2b4a9a" stroke-width="0.6"/></svg>
<svg style="left:1028px;top:55px;" width="15" height="23" viewBox="0 0 15 23"><g transform="scale(0.49,0.5)"><path d="M13 1.5 L22 37.5 L8.5 38 Z" fill="#2b4a9a"/><path d="M11 10 L7 37.5 L8.2 37.6 Z" fill="#2b4a9a"/><path d="M1 42.8 Q12 41 25.5 35 L25 37.8 Q13 43.5 1.5 45 Z" fill="#d0304e"/></g></svg>
<svg style="left:85px;top:93px;" width="12" height="15" viewBox="0 0 12 15"><g transform="scale(0.5000,0.5000)"><defs><linearGradient id="cbg85_93" x1="0" y1="0" x2="1" y2="1"><stop offset="0" stop-color="#f0a048"/><stop offset="1" stop-color="#a85a1c"/></linearGradient></defs>
<rect x="0.5" y="2" width="23" height="28" rx="2" fill="url(#cbg85_93)"/>
<path d="M3 5 H21 V27.5 H8.5 L3 22 Z" fill="#f4f7fb"/>
<path d="M3 22 L8.5 22.5 L8.5 27.5 Z" fill="#dcdcdc"/>
<rect x="7" y="0" width="10" height="4.5" rx="2" fill="#b9b9b9"/>
<rect x="3" y="4" width="18" height="1.6" fill="#8e8e8e"/>
<path d="M4.5 18.5 L9.5 16.5 L12.5 20 Q16.5 11 23.5 7.5 L22.5 10 Q17 15 13.5 24 Z" fill="#2f9be0"/></g></svg>
<svg style="left:10px;top:90px;" width="5" height="6" viewBox="0 0 5 6"><path d="M4 0 L0.8 3 L4 6" stroke="#1b2a3e" stroke-width="1.8" fill="none"/></svg>
<svg style="left:11.7px;top:100px;" width="5" height="6" viewBox="0 0 5 6"><path d="M0.8 0 L4 3 L0.8 6" stroke="#1b2a3e" stroke-width="1.8" fill="none"/></svg>
<svg style="left:1045px;top:187px;" width="5" height="6" viewBox="0 0 5 6"><path d="M4 0 L0.8 3 L4 6" stroke="#1b2a3e" stroke-width="1.8" fill="none"/></svg>
<svg style="left:1046.7px;top:197px;" width="5" height="6" viewBox="0 0 5 6"><path d="M0.8 0 L4 3 L0.8 6" stroke="#1b2a3e" stroke-width="1.8" fill="none"/></svg>
<svg style="left:32px;top:131px;" width="24" height="30" viewBox="0 0 24 30"><g transform="scale(1.0000,1.0000)"><defs><linearGradient id="cbg32_131" x1="0" y1="0" x2="1" y2="1"><stop offset="0" stop-color="#f0a048"/><stop offset="1" stop-color="#a85a1c"/></linearGradient></defs>
<rect x="0.5" y="2" width="23" height="28" rx="2" fill="url(#cbg32_131)"/>
<path d="M3 5 H21 V27.5 H8.5 L3 22 Z" fill="#f4f7fb"/>
<path d="M3 22 L8.5 22.5 L8.5 27.5 Z" fill="#dcdcdc"/>
<rect x="7" y="0" width="10" height="4.5" rx="2" fill="#b9b9b9"/>
<rect x="3" y="4" width="18" height="1.6" fill="#8e8e8e"/>
<path d="M4.5 18.5 L9.5 16.5 L12.5 20 Q16.5 11 23.5 7.5 L22.5 10 Q17 15 13.5 24 Z" fill="#2f9be0"/></g></svg>
<div style="left:825px;top:138.5px;width:12px;height:1.6px;background:#3cb0e2;"></div>
<div style="left:825px;top:142.0px;width:12px;height:1.6px;background:#3cb0e2;"></div>
<div style="left:825px;top:145.5px;width:12px;height:1.6px;background:#3cb0e2;"></div>
<div style="left:825px;top:149.0px;width:12px;height:1.6px;background:#3cb0e2;"></div>
<svg style="left:853px;top:136px;" width="13" height="15" viewBox="0 0 13 15"><defs><linearGradient id="lk" x1="0" x2="0" y1="0" y2="1"><stop offset="0" stop-color="#f8e9a8"/><stop offset="1" stop-color="#c89a30"/></linearGradient></defs><path d="M3 7 V4.5 Q3 1 6.5 1 Q10 1 10 4.5 V7" fill="none" stroke="#9b9b9b" stroke-width="1.8"/><rect x="0.5" y="6.5" width="12" height="8.5" rx="1.5" fill="url(#lk)"/></svg>
<svg style="left:875px;top:145px;" width="5" height="3" viewBox="0 0 5 3"><path d="M0 0 H5 L2.5 3 Z" fill="#000"/></svg>
<svg style="left:890px;top:137px;" width="15" height="14" viewBox="0 0 15 14"><g transform="scale(1.0000,1.0000)"><defs><linearGradient id="bn890_137" x1="0" x2="1"><stop offset="0" stop-color="#111"/><stop offset="0.5" stop-color="#7a7a7a"/><stop offset="1" stop-color="#111"/></linearGradient></defs>
<rect x="3" y="0" width="3" height="3.5" fill="#2a2a2a"/><rect x="8.5" y="0" width="3" height="3.5" fill="#2a2a2a"/>
<path d="M1.5 4 H13.5 V8 H1.5 Z" fill="#333"/><rect x="5" y="5" width="5" height="1.5" fill="#666"/>
<rect x="0.3" y="7.5" width="5" height="6.5" rx="0.8" fill="url(#bn890_137)"/><rect x="9.7" y="7.5" width="5" height="6.5" rx="0.8" fill="url(#bn890_137)"/></g></svg>
<svg style="left:913px;top:145px;" width="5" height="3" viewBox="0 0 5 3"><path d="M0 0 H5 L2.5 3 Z" fill="#000"/></svg>
<svg style="left:927px;top:136px;" width="10" height="12" viewBox="0 0 10 12"><g transform="scale(0.4167,0.4000)"><defs><linearGradient id="cbg927_136" x1="0" y1="0" x2="1" y2="1"><stop offset="0" stop-color="#f0a048"/><stop offset="1" stop-color="#a85a1c"/></linearGradient></defs>
<rect x="0.5" y="2" width="23" height="28" rx="2" fill="url(#cbg927_136)"/>
<path d="M3 5 H21 V27.5 H8.5 L3 22 Z" fill="#f4f7fb"/>
<path d="M3 22 L8.5 22.5 L8.5 27.5 Z" fill="#dcdcdc"/>
<rect x="7" y="0" width="10" height="4.5" rx="2" fill="#b9b9b9"/>
<rect x="3" y="4" width="18" height="1.6" fill="#8e8e8e"/>
<path d="M4.5 18.5 L9.5 16.5 L12.5 20 Q16.5 11 23.5 7.5 L22.5 10 Q17 15 13.5 24 Z" fill="#2f9be0"/></g></svg>
<svg style="left:932px;top:141px;" width="12" height="11" viewBox="0 0 12 11"><rect x="0.5" y="0.5" width="11" height="10" rx="1" fill="#f4f4f4" stroke="#a9a9a9" stroke-width="0.8"/><rect x="0.5" y="0.5" width="11" height="3" fill="#3c9ddf"/></svg>
<svg style="left:951px;top:145px;" width="5" height="3" viewBox="0 0 5 3"><path d="M0 0 H5 L2.5 3 Z" fill="#000"/></svg>
<div style="left:959px;top:134px;width:1px;height:22px;background:linear-gradient(rgba(120,165,220,0),#7aa6d8 30%,#7aa6d8 70%,rgba(120,165,220,0));"></div>
<svg style="left:966px;top:137px;" width="16" height="14" viewBox="0 0 16 14"><defs><linearGradient id="c1" x1="0" x2="1"><stop offset="0" stop-color="#1d8fd8"/><stop offset="1" stop-color="#8fd0f4"/></linearGradient><linearGradient id="c2" x1="0" x2="1"><stop offset="0" stop-color="#d8401c"/><stop offset="1" stop-color="#f6a080"/></linearGradient><linearGradient id="c3" x1="0" x2="1"><stop offset="0" stop-color="#e0b818"/><stop offset="1" stop-color="#f8e890"/></linearGradient></defs><rect x="0" y="2.2" width="5" height="11.6" rx="1.2" fill="url(#c1)"/><rect x="5.5" y="4.5" width="4.5" height="9.3" rx="1.2" fill="url(#c2)"/><rect x="10.8" y="0.2" width="4.8" height="13.6" rx="1.2" fill="url(#c3)"/></svg>
<div style="left:988px;top:134px;width:1px;height:22px;background:linear-gradient(rgba(120,165,220,0),#7aa6d8 30%,#7aa6d8 70%,rgba(120,165,220,0));"></div>
<svg style="left:995px;top:137px;" width="16" height="15" viewBox="0 0 16 15"><rect x="0.5" y="0.5" width="13" height="10" rx="1" fill="#e6eaee" stroke="#c9d0d8" stroke-width="0.8"/><circle cx="4" cy="4" r="1.6" fill="#a0a8b0"/><rect x="2" y="6" width="4" height="2" fill="#a0a8b0"/><circle cx="11.5" cy="11" r="4" fill="#d4e0ec" stroke="#b8c6d4" stroke-width="0.8"/><rect x="11" y="10" width="1" height="3" fill="#fff"/></svg>
<div style="left:1017px;top:134px;width:1px;height:22px;background:linear-gradient(rgba(120,165,220,0),#7aa6d8 30%,#7aa6d8 70%,rgba(120,165,220,0));"></div>
<svg style="left:1026px;top:138px;" width="12" height="12" viewBox="0 0 12 12"><path d="M2 2 L10 10 M10 2 L2 10" stroke="#e8301c" stroke-width="3.6" stroke-linecap="square"/></svg>
<svg style="left:24px;top:876px;" width="7" height="5" viewBox="0 0 7 5"><path d="M0.8 4.2 L3.5 1.2 L6.2 4.2" stroke="#0f1e33" stroke-width="1.9" fill="none"/></svg>
<svg style="left:37px;top:877px;" width="7" height="5" viewBox="0 0 7 5"><path d="M0.8 1 L3.5 4 L6.2 1" stroke="#0f1e33" stroke-width="1.9" fill="none"/></svg>
</body></html>
